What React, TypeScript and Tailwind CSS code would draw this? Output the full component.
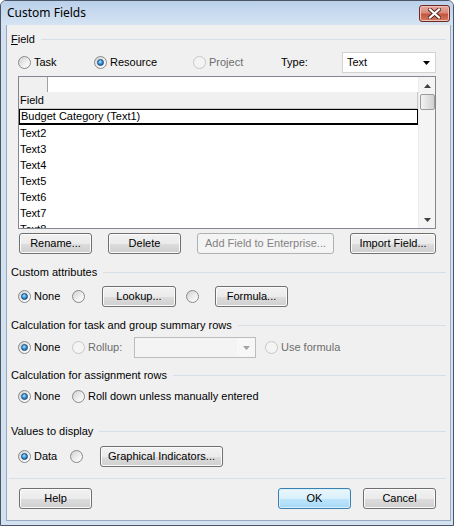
import React from 'react';

const FONT = { fontFamily: '"Liberation Sans", Arial, sans-serif' };

function Radio({ checked = false, disabled = false }: { checked?: boolean; disabled?: boolean }) {
  return (
    <span
      className={`inline-flex w-[13px] h-[13px] shrink-0 items-center justify-center rounded-full border ${
        disabled
          ? 'border-[#c6c6c6] bg-[#f4f4f4]'
          : 'border-[#8a8a8a] bg-[linear-gradient(135deg,#cfcfcf,#eeeeee_55%,#ffffff)]'
      }`}
    >
      {checked && (
        <span className="w-[7px] h-[7px] rounded-full border border-[#17497a] bg-[radial-gradient(circle_at_40%_35%,#b5e8ff_0%,#3b98dc_45%,#0e4f8f_100%)]" />
      )}
    </span>
  );
}

function Option({
  label,
  checked,
  disabled,
  className = '',
}: {
  label?: string;
  checked?: boolean;
  disabled?: boolean;
  className?: string;
}) {
  return (
    <div className={`flex items-center ${className}`}>
      <Radio checked={checked} disabled={disabled} />
      {label && (
        <span className={`ml-[3px] ${disabled ? 'text-[#6d6d6d]' : 'text-black'}`}>{label}</span>
      )}
    </div>
  );
}

function Btn({
  children,
  className = '',
  primary,
  disabled,
}: {
  children: React.ReactNode;
  className?: string;
  primary?: boolean;
  disabled?: boolean;
}) {
  let look =
    'border-[#707070] text-black bg-[linear-gradient(to_bottom,#f2f2f2_0%,#ebebeb_50%,#dddddd_51%,#cfcfcf_100%)] shadow-[inset_0_0_0_1px_#fbfbfb]';
  if (primary)
    look =
      'border-[#3c7fb1] text-black bg-[linear-gradient(to_bottom,#eaf6fd_0%,#d9f0fc_50%,#bee6fd_51%,#a7d9f5_100%)] shadow-[inset_0_0_0_1px_#d8f1fc]';
  if (disabled) look = 'border-[#adb2b5] text-[#838383] bg-[#f4f4f4]';
  return (
    <div
      className={`h-[21px] shrink-0 flex items-center justify-center rounded-[3px] border ${look} ${className}`}
    >
      {children}
    </div>
  );
}

function Group({ children, className = '' }: { children: React.ReactNode; className?: string }) {
  return (
    <div className={`h-[14px] flex items-center pl-[4px] pr-[4px] ${className}`}>
      <span className="whitespace-nowrap">{children}</span>
      <div className="flex-1 h-px bg-[#d5dfe5] ml-[6px]" />
    </div>
  );
}

const rows = ['Text2', 'Text3', 'Text4', 'Text5', 'Text6', 'Text7', 'Text8'];

function Arrow({ up, color = '#000' }: { up?: boolean; color?: string }) {
  return (
    <svg width="7" height="4" viewBox="0 0 7 4">
      <path d={up ? 'M0 4 L3.5 0 L7 4 Z' : 'M0 0 L7 0 L3.5 4 Z'} fill={color} />
    </svg>
  );
}

export default function App() {
  return (
    <div
      className="w-[454px] h-[526px] flex flex-col border border-[#4a5566] rounded-t-[6px] bg-[#d3e1f0] text-[11px] leading-none overflow-hidden"
      style={FONT}
    >
      {/* title bar */}
      <div className="h-[24px] shrink-0 flex items-start bg-[linear-gradient(to_bottom,#bad0ea,#d6e4f3)]">
        <span
          className="ml-[6px] mt-[6px] text-[12px] text-black"
          style={{ fontFamily: '"Noto Sans", "Open Sans", sans-serif' }}
        >
          Custom Fields
        </span>
        <div className="ml-auto mr-[3px] mt-[4px] w-[31px] h-[17px] rounded-[3px] border border-[#6b2a25] flex items-center justify-center bg-[linear-gradient(to_bottom,#e6aa9f_0%,#d88a7c_45%,#c5543f_55%,#d47a5e_100%)] shadow-[inset_0_0_0_1px_#eec0b6]">
          <svg width="13" height="11" viewBox="0 0 13 11">
            <path d="M2 1.5 L11 9.5 M11 1.5 L2 9.5" stroke="#5a2620" strokeWidth="4" strokeLinecap="square" />
            <path d="M2 1.5 L11 9.5 M11 1.5 L2 9.5" stroke="#ffffff" strokeWidth="2.2" strokeLinecap="square" />
          </svg>
        </div>
      </div>

      {/* client area */}
      <div className="flex-1 ml-[5px] mr-[2px] mb-[4px] border-l border-r border-b border-[#9aabbf] bg-[#f0f0f0] flex flex-col">
        <Group className="mt-[7px]">
          <span className="underline">F</span>ield
        </Group>

        <div className="mt-[6px] h-[21px] flex items-center pl-[11px]">
          <Option label="Task" className="w-[76px]" />
          <Option label="Resource" checked className="w-[99px]" />
          <Option label="Project" disabled className="w-[88px]" />
          <span className="w-[61px]">Type:</span>
          <div className="w-[94px] h-[21px] bg-white border border-[#d3d3d3] flex items-center pl-[4px] pr-[5px]">
            <span>Text</span>
            <span className="ml-auto flex">
              <Arrow />
            </span>
          </div>
        </div>

        {/* field grid */}
        <div className="mt-[3px] ml-[11px] w-[418px] h-[153px] border border-[#828790] bg-white flex overflow-hidden">
          <div className="w-[399px] flex flex-col">
            <div className="h-[15px] shrink-0 flex">
              <div className="w-[29px] bg-[#f0f0f0] border-r border-[#a0a0a0]" />
              <div className="flex-1" />
            </div>
            <div className="h-[17px] shrink-0 bg-[#f0f0f0] border-r border-b border-[#c8c8c8] flex items-center pl-[1px]">
              Field
            </div>
            <div className="h-[16px] shrink-0 border border-b-2 border-black flex items-center pl-[1px]">
              Budget Category (Text1)
            </div>
            {rows.map((r) => (
              <div key={r} className="h-[16px] shrink-0 flex items-center pl-[1px]">
                {r}
              </div>
            ))}
          </div>
          <div className="w-[17px] bg-[#f4f4f4] border-l border-[#ececec] flex flex-col items-center">
            <div className="h-[17px] flex items-center justify-center">
              <Arrow up color="#404040" />
            </div>
            <div className="w-[15px] h-[16px] rounded-[2px] border border-[#9b9b9b] bg-[linear-gradient(to_right,#f3f3f3,#e2e2e2_50%,#d0d0d0)]" />
            <div className="flex-1" />
            <div className="h-[17px] flex items-center justify-center">
              <Arrow color="#404040" />
            </div>
          </div>
        </div>

        <div className="mt-[4px] flex">
          <Btn className="ml-[12px] w-[73px]">Rename...</Btn>
          <Btn className="ml-[16px] w-[73px]">Delete</Btn>
          <Btn className="ml-[16px] w-[137px]" disabled>
            Add Field to Enterprise...
          </Btn>
          <Btn className="ml-[16px] w-[86px]">Import Field...</Btn>
        </div>

        <Group className="mt-[11px]">Custom attributes</Group>
        <div className="mt-[7px] h-[21px] flex items-center pl-[11px]">
          <Option label="None" checked className="w-[54px]" />
          <Radio />
          <Btn className="ml-[17px] w-[74px]">Lookup...</Btn>
          <div className="ml-[10px] flex">
            <Radio />
          </div>
          <Btn className="ml-[16px] w-[73px]">Formula...</Btn>
        </div>

        <Group className="mt-[11px]">Calculation for task and group summary rows</Group>
        <div className="mt-[5px] h-[21px] flex items-center pl-[11px]">
          <Option label="None" checked className="w-[54px]" />
          <div className="w-[62px] flex items-center">
            <Radio disabled />
            <span className="ml-[3px] text-[#6d6d6d]">Rollup:</span>
          </div>
          <div className="w-[122px] h-[21px] border border-[#bcbcbc] bg-[#f4f4f4] flex">
            <div className="flex-1" />
            <div className="w-[18px] border-l border-[#f9f9f9] bg-[#f7f7f7] flex items-center justify-center">
              <Arrow color="#a3a3a3" />
            </div>
          </div>
          <Option label="Use formula" disabled className="ml-[9px]" />
        </div>

        <Group className="mt-[10px]">Calculation for assignment rows</Group>
        <div className="mt-[4px] h-[21px] flex items-center pl-[11px]">
          <Option label="None" checked className="w-[54px]" />
          <Option label="Roll down unless manually entered" />
        </div>

        <Group className="mt-[17px]">Values to display</Group>
        <div className="mt-[8px] h-[21px] flex items-center pl-[11px]">
          <Option label="Data" checked className="w-[52px]" />
          <Radio />
          <Btn className="ml-[17px] w-[123px]">Graphical Indicators...</Btn>
        </div>

        <div className="mt-[11px] ml-[2px] w-[437px] h-px bg-[#d5dfe5]" />

        <div className="mt-[9px] flex">
          <Btn className="ml-[12px] w-[73px]">Help</Btn>
          <Btn className="ml-[186px] w-[73px]" primary>
            OK
          </Btn>
          <Btn className="ml-[12px] w-[73px]">Cancel</Btn>
        </div>
      </div>
    </div>
  );
}
